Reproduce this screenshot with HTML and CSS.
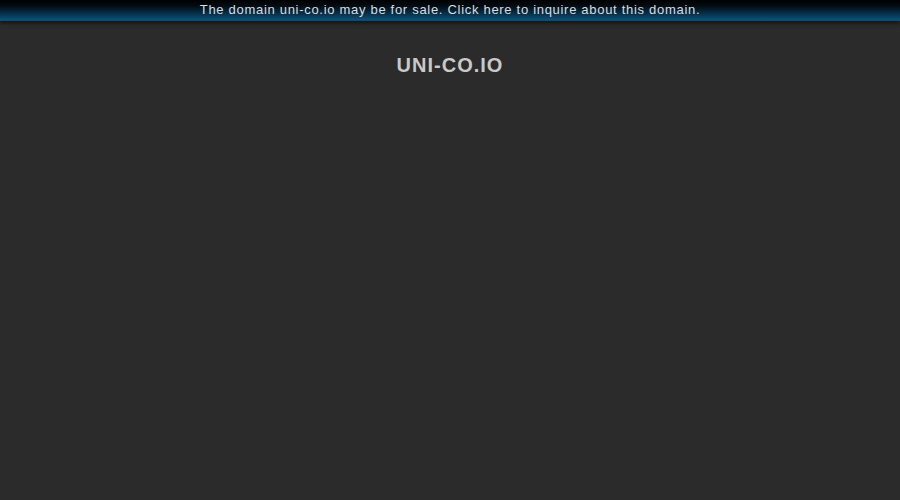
FILE: index.html
```html
<!DOCTYPE html>
<html>
<head>
<meta charset="utf-8">
<link rel="stylesheet" href="styles.css">
</head>
<body>
<div class="bar"><a class="bar-link" href="#">The domain uni-co.io may be for sale. Click here to inquire about this domain.</a></div>
<h1 class="title">UNI-CO.IO</h1>
</body>
</html>
```
FILE: styles.css
```css
html, body {
  margin: 0;
  padding: 0;
  background: #2b2b2b;
  height: 100%;
}
body {
  font-family: "Liberation Sans", Arial, sans-serif;
}
.bar {
  height: 20px;
  background: linear-gradient(to bottom, #000000 0%, #020c14 30%, #083d5c 80%, #0d5278 100%);
  box-shadow: 0 2px 4px rgba(0,0,0,0.6);
  text-align: center;
  line-height: 18px;
  border-bottom: 1px solid #164a68;
}
.bar-link {
  color: #d8dde0;
  font-size: 13px;
  letter-spacing: 0.7px;
  text-decoration: none;
}
.title {
  margin: 32px 0 0;
  text-align: center;
  color: #c9c9c9;
  font-size: 20px;
  font-weight: bold;
  letter-spacing: 1px;
  line-height: 24px;
}
```
